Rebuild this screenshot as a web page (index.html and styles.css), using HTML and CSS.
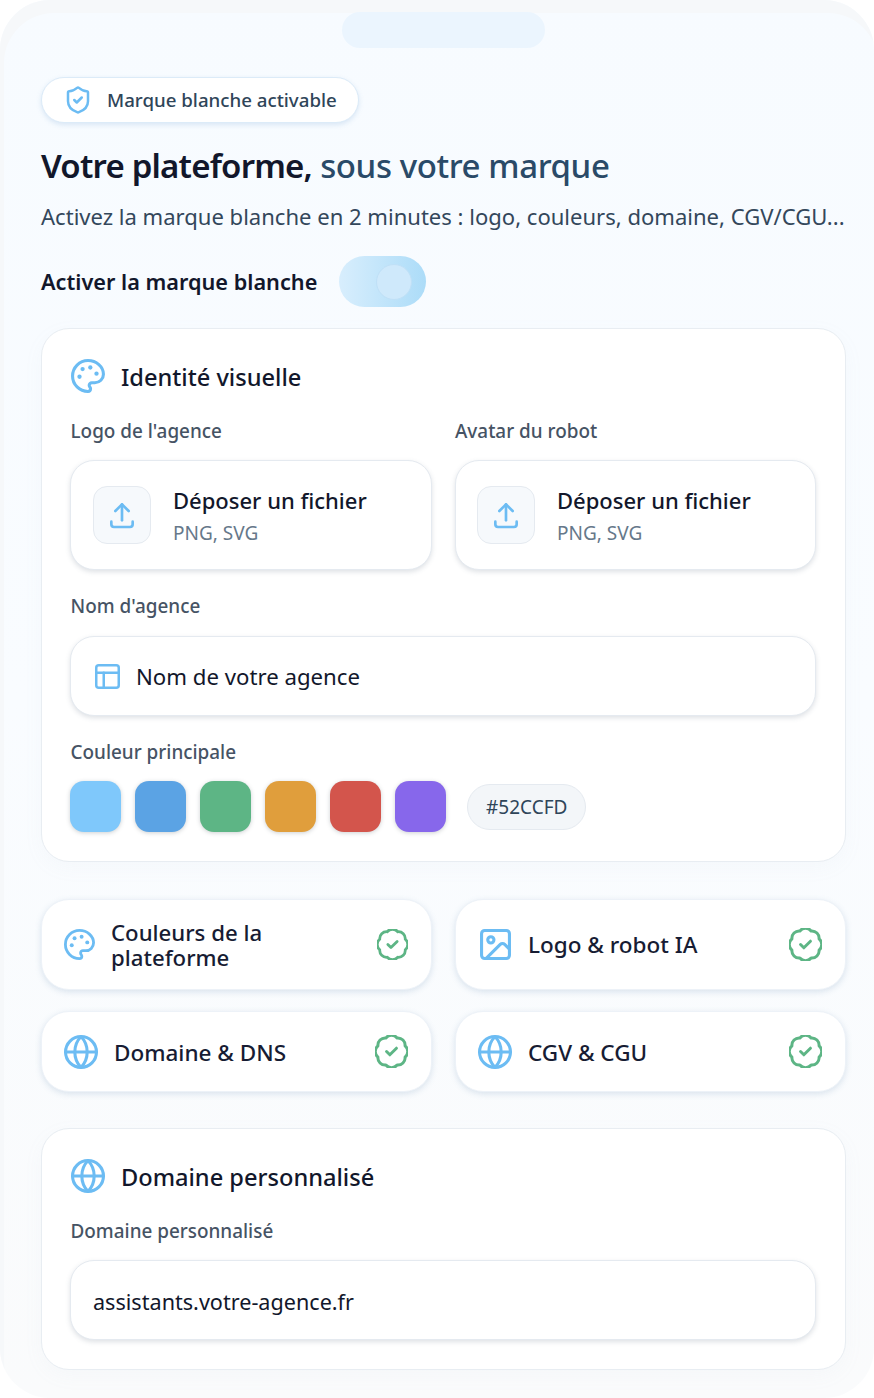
FILE: index.html
```html
<!DOCTYPE html>
<html lang="fr">
<head>
<meta charset="utf-8">
<title>Marque blanche</title>
<link rel="stylesheet" href="styles.css">
</head>
<body>
<svg class="defs" width="0" height="0" aria-hidden="true">
  <symbol id="palette" viewBox="1 1 22 22"><path d="M12 2C6.5 2 2 6.5 2 12s4.5 10 10 10c.926 0 1.648-.746 1.648-1.688 0-.437-.18-.835-.437-1.125-.29-.289-.438-.652-.438-1.125a1.64 1.64 0 0 1 1.668-1.668h1.996c3.051 0 5.555-2.503 5.555-5.554C21.965 6.012 17.461 2 12 2z"/><g class="dots"><circle cx="6.5" cy="12.5" r="1.4"/><circle cx="8.5" cy="7.5" r="1.4"/><circle cx="13.5" cy="6.5" r="1.4"/><circle cx="17.5" cy="10.5" r="1.4"/></g></symbol>
  <symbol id="globe" viewBox="1 1 22 22"><circle cx="12" cy="12" r="10"/><path d="M12 2a14.5 14.5 0 0 0 0 20 14.5 14.5 0 0 0 0-20"/><path d="M2 12h20"/></symbol>
  <symbol id="badge" viewBox="2 2 20 20"><path d="M20.22 8.59A4.4 4.4 0 0 1 20.22 15.41A4.4 4.4 0 0 1 15.41 20.22A4.4 4.4 0 0 1 8.59 20.22A4.4 4.4 0 0 1 3.78 15.41A4.4 4.4 0 0 1 3.78 8.59A4.4 4.4 0 0 1 8.59 3.78A4.4 4.4 0 0 1 15.41 3.78A4.4 4.4 0 0 1 20.22 8.59Z"/><path d="M9 12l2 2 4-4"/></symbol>
  <symbol id="upload" viewBox="0 0 24 24"><path d="M4 17v2a2 2 0 0 0 2 2h12a2 2 0 0 0 2-2v-2"/><path d="M7 9l5-5 5 5"/><path d="M12 4v12"/></symbol>
</svg>
<main class="frame">
  <div class="notch"></div>
  <div class="pill">
    <svg class="icon ic-shield" viewBox="0 0 24 24"><path d="M20 13c0 5-3.5 7.5-7.66 8.95a1 1 0 0 1-.67-.01C7.5 20.5 4 18 4 13V6a1 1 0 0 1 1-1c2 0 4.5-1.2 6.24-2.72a1.17 1.17 0 0 1 1.52 0C14.51 3.81 17 5 19 5a1 1 0 0 1 1 1z"/><path d="m9 12 2 2 4-4"/></svg>
    <span class="pill-text">Marque blanche activable</span>
  </div>
  <h1 class="title"><span class="title-strong">Votre plateforme,</span> <span class="title-soft">sous votre marque</span></h1>
  <p class="sub">Activez la marque blanche en 2 minutes : logo, couleurs, domaine, CGV/CGU...</p>
  <div class="toggle-row">
    <span class="toggle-label">Activer la marque blanche</span>
    <div class="toggle"><div class="knob"></div></div>
  </div>

  <section class="card card-identity">
    <h2 class="card-title"><svg class="icon ic-head"><use href="#palette"/></svg><span class="card-title-text">Identité visuelle</span></h2>
    <div class="cols">
      <div class="col">
        <div class="label">Logo de l'agence</div>
        <div class="drop">
          <div class="drop-icon"><svg class="icon ic-upload"><use href="#upload"/></svg></div>
          <div class="drop-text"><div class="drop-main">Déposer un fichier</div><div class="drop-sub">PNG, SVG</div></div>
        </div>
      </div>
      <div class="col col-right">
        <div class="label">Avatar du robot</div>
        <div class="drop">
          <div class="drop-icon"><svg class="icon ic-upload"><use href="#upload"/></svg></div>
          <div class="drop-text"><div class="drop-main">Déposer un fichier</div><div class="drop-sub">PNG, SVG</div></div>
        </div>
      </div>
    </div>
    <div class="label label-gap">Nom d'agence</div>
    <div class="field field-icon">
      <svg class="icon ic-layout" viewBox="2 2 20 20"><rect x="3" y="3" width="18" height="18" rx="2"/><path d="M3 9h18"/><path d="M9 21V9"/></svg>
      <span>Nom de votre agence</span>
    </div>
    <div class="label label-gap">Couleur principale</div>
    <div class="swatches">
      <div class="swatch sw1"></div>
      <div class="swatch sw2"></div>
      <div class="swatch sw3"></div>
      <div class="swatch sw4"></div>
      <div class="swatch sw5"></div>
      <div class="swatch sw6"></div>
      <div class="hex">#52CCFD</div>
    </div>
  </section>

  <section class="features">
    <div class="feature">
      <svg class="icon ic-feat-pal"><use href="#palette"/></svg>
      <span class="feature-text feature-text-wrap">Couleurs de la plateforme</span>
      <svg class="icon check ic-check-s"><use href="#badge"/></svg>
    </div>
    <div class="feature">
      <svg class="icon ic-image" viewBox="2 2 20 20"><rect x="3" y="3" width="18" height="18" rx="2"/><circle cx="9" cy="9" r="2"/><path d="m21 15-3.086-3.086a2 2 0 0 0-2.828 0L6 21"/></svg>
      <span class="feature-text">Logo &amp; robot IA</span>
      <svg class="icon check"><use href="#badge"/></svg>
    </div>
    <div class="feature feature-short">
      <svg class="icon ic-head"><use href="#globe"/></svg>
      <span class="feature-text">Domaine &amp; DNS</span>
      <svg class="icon check"><use href="#badge"/></svg>
    </div>
    <div class="feature feature-short">
      <svg class="icon ic-head"><use href="#globe"/></svg>
      <span class="feature-text">CGV &amp; CGU</span>
      <svg class="icon check"><use href="#badge"/></svg>
    </div>
  </section>

  <section class="card card-domain">
    <h2 class="card-title"><svg class="icon ic-head"><use href="#globe"/></svg><span class="card-title-text">Domaine personnalisé</span></h2>
    <div class="label">Domaine personnalisé</div>
    <div class="field field-text"><span class="field-value">assistants.votre-agence.fr</span></div>
  </section>
</main>
</body>
</html>
```
FILE: styles.css
```css
* { box-sizing: border-box; }
html, body { margin: 0; height: 1398px; overflow: hidden; background: #fff; }
body { font-family: "Noto Sans", "Open Sans", sans-serif; color: #12172b; }
.defs { position: absolute; }
.icon { display: block; flex: none; fill: none; stroke: #6cbcf3; stroke-width: 2; stroke-linecap: round; stroke-linejoin: round; overflow: visible; }
.dots { fill: #6cbcf3; stroke: none; }

.frame {
  width: 874px; height: 1398px; border-radius: 50px;
  padding: 12px 28px 0 41px;
  background: linear-gradient(180deg, #f7fbff 0%, #f9fcff 50%, #fafbfc 100%);
  box-shadow: inset 4px 13px 0 #f6f8fa;
}
.notch { width: 203px; height: 36px; margin-left: 301px; border-radius: 18px; background: #ebf5fe; }
.pill {
  display: inline-flex; align-items: center; gap: 14px;
  height: 46px; margin-top: 29px; padding: 0 21px 0 21px;
  background: #fff; border: 1px solid #dcebf8; border-radius: 23px;
  box-shadow: 0 2px 5px rgba(108, 160, 210, .22);
  font-size: 18.7px; font-weight: 500; color: #2f4559;
}
.pill-text { padding-bottom: 2px; }
.ic-shield { width: 30px; height: 30px; stroke-width: 2; }
.title { margin: 20px 0 0; font-size: 33px; line-height: 46px; font-weight: 600; color: #12172b; letter-spacing: -.4px; }
.title-strong { letter-spacing: -.8px; }
.title-soft { color: #2a4a68; font-weight: 500; }
.sub { margin: 12px 0 0; font-size: 22.05px; line-height: 30px; color: #33475b; white-space: nowrap; }
.toggle-row { display: flex; align-items: center; gap: 22px; height: 51px; margin-top: 25px; }
.toggle-label { font-size: 21.7px; font-weight: 600; color: #12172b; }
.toggle { display: flex; align-items: center; justify-content: flex-end; width: 87px; height: 51px; padding-right: 14px; border-radius: 26px; background: linear-gradient(90deg, #d8eefd, #acdcf8); }
.knob { width: 36px; height: 36px; border-radius: 50%; background: #cfe9fb; border: 1px solid #bfe0f7; }

.card { width: 805px; padding: 0 28px; background: #fff; border: 1px solid #e8edf2; border-radius: 28px; box-shadow: 0 6px 20px rgba(150, 170, 190, .05); }
.card-identity { height: 534px; margin-top: 21px; }
.card-domain { height: 242px; margin-top: 36px; }
.card-title { display: flex; align-items: center; gap: 16px; height: 34px; margin: 30px 0 0; padding-left: 1px; font-size: 23.6px; font-weight: 500; color: #12172b; }
.card-title-text { padding-top: 2px; }
.ic-head { width: 34px; height: 34px; }
.cols { display: grid; grid-template-columns: 362px 361px; gap: 23px; margin-top: 25px; }
.label { padding-left: .5px; font-size: 18.9px; line-height: 26px; font-weight: 500; color: #465364; }
.col-right .label { padding-left: 0; }
.card-domain .label { margin-top: 25px; }
.drop { display: flex; align-items: center; gap: 22px; height: 110px; margin-top: 16px; padding-left: 22px; background: #fff; border: 1px solid #e5eaf0; border-radius: 24px; box-shadow: 0 2px 5px rgba(70, 90, 110, .18); }
.col-right .drop { padding-left: 21px; }
.drop-icon { display: flex; align-items: center; justify-content: center; width: 58px; height: 58px; background: #f6f9fc; border: 1px solid #e5eaf0; border-radius: 14px; }
.ic-upload { width: 32px; height: 32px; }
.drop-text { padding-bottom: 1px; }
.drop-main { padding-top: 2px; font-size: 22px; line-height: 30px; font-weight: 500; color: #12172b; }
.drop-sub { margin-top: 5px; font-size: 19px; line-height: 26px; color: #66788a; }
.label-gap { margin-top: 23px; }
.field { display: flex; align-items: center; width: 746px; height: 80px; margin-top: 16px; background: #fff; border: 1px solid #e5eaf0; border-radius: 24px; box-shadow: 0 2px 5px rgba(70, 90, 110, .18); font-size: 22.2px; color: #12172b; }
.field-icon { gap: 16px; margin-top: 17px; padding-left: 24px; }
.field-text { padding-left: 22px; font-size: 21.6px; }
.field-value { padding-top: 2px; }
.ic-layout { width: 25px; height: 25px; }
.swatches { display: flex; align-items: center; gap: 14px; margin-top: 16px; }
.swatch { width: 51px; height: 51px; border-radius: 14px; box-shadow: 0 1px 4px rgba(60, 70, 80, .25); }
.sw1 { background: #7fc8fb; }
.sw2 { background: #5ba3e4; }
.sw3 { background: #5db585; }
.sw4 { background: #e09e3c; }
.sw5 { background: #d3554c; }
.sw6 { background: #8767eb; }
.hex { display: flex; align-items: center; height: 46px; margin-left: 7px; padding: 0 18px; background: #f3f6f9; border: 1px solid #e5eaf0; border-radius: 23px; font-size: 19px; color: #2f4559; }

.features { display: grid; grid-template-columns: 391px 391px; grid-template-rows: 91px 81px; gap: 21px 23px; margin-top: 37px; }
.feature { display: flex; align-items: center; gap: 16px; padding: 0 23px 0 22px; background: #fff; border: 1px solid #edf2f8; border-radius: 28px; box-shadow: 0 2px 6px rgba(90, 130, 170, .2); }
.feature-text { flex: 1; font-size: 22.5px; line-height: 25px; font-weight: 500; color: #171c33; }
.feature-text-wrap { font-size: 22.2px; }
.feature-short .feature-text { padding-top: 2px; }
.ic-feat-pal { width: 31px; height: 31px; }
.ic-image { width: 31px; height: 31px; margin: 0 1px 0 2px; }
.check { width: 33px; height: 33px; stroke: #5db585; stroke-width: 1.8; }
.ic-check-s { width: 31px; height: 31px; }
```
